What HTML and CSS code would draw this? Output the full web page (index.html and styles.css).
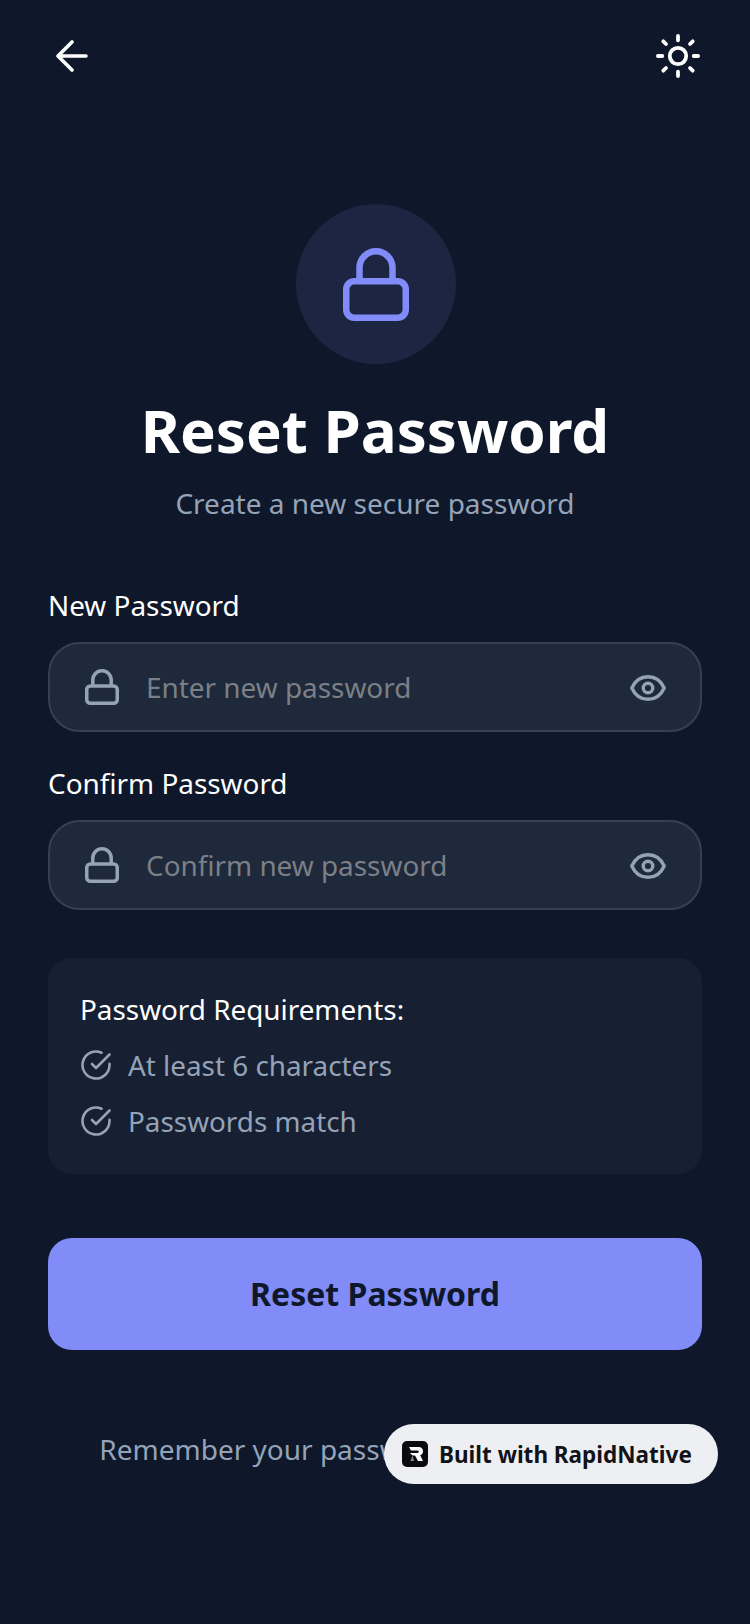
FILE: index.html
```html
<!DOCTYPE html>
<html>
    <head>
        <title>Reset Password</title>
        <link rel="stylesheet" href="styles.css">
    </head>
    <body>
        <div class="screen">
            <header class="topbar">
                <svg class="back-icon" viewBox="0 0 32 32" fill="none" stroke="#fff" stroke-width="3.600" stroke-linecap="round" stroke-linejoin="round">
                    <path d="M30 16H2M16 2 2 16l14 14"/>
                </svg>
                <svg class="sun-icon" viewBox="0 0 44 44" fill="none" stroke="#fff" stroke-width="3.800" stroke-linecap="round">
                    <circle cx="22" cy="22" r="8.200"/>
                    <path d="M22 1.900v4.400M22 37.700v4.400M1.900 22h4.400M37.700 22h4.400M7.300 7.300 10 10M34 34l2.700 2.700M7.300 36.700 10 34M34 10l2.700-2.700"/>
                </svg>
            </header>

            <div class="lock-circle">
                <svg class="lock-big" viewBox="0 0 66 73" fill="none" stroke="#818cf8" stroke-width="6.500" stroke-linejoin="round">
                    <rect x="3.250" y="33.250" width="59.500" height="36.500" rx="8"/>
                    <path d="M16.500 33.250V19.750a16.500 16.500 0 0 1 33 0v13.500"/>
                </svg>
            </div>

            <h1 class="title">Reset Password</h1>
            <p class="subtitle">Create a new secure password</p>

            <label class="field-label">New Password</label>
            <div class="input-box">
                <svg class="lock-small" viewBox="0 0 34 36" fill="none" stroke="#94a3b8" stroke-width="3.500" stroke-linejoin="round">
                    <rect x="1.750" y="17" width="30.500" height="17.250" rx="3.500"/>
                    <path d="M7.800 17V10.900a9.200 9.150 0 0 1 18.400 0V17"/>
                </svg>
                <span class="placeholder">Enter new password</span>
                <svg class="eye" viewBox="0 0 36 26" fill="none" stroke="#94a3b8" stroke-width="3.400">
                    <path d="M1.800 13C5 5.800 11 1.700 18 1.700S31 5.800 34.200 13C31 20.200 25 24.300 18 24.300S5 20.200 1.800 13Z" stroke-linejoin="round"/>
                    <circle cx="18" cy="13" r="4.800"/>
                </svg>
            </div>

            <label class="field-label second">Confirm Password</label>
            <div class="input-box">
                <svg class="lock-small" viewBox="0 0 34 36" fill="none" stroke="#94a3b8" stroke-width="3.500" stroke-linejoin="round">
                    <rect x="1.750" y="17" width="30.500" height="17.250" rx="3.500"/>
                    <path d="M7.800 17V10.900a9.200 9.150 0 0 1 18.400 0V17"/>
                </svg>
                <span class="placeholder">Confirm new password</span>
                <svg class="eye" viewBox="0 0 36 26" fill="none" stroke="#94a3b8" stroke-width="3.400">
                    <path d="M1.800 13C5 5.800 11 1.700 18 1.700S31 5.800 34.200 13C31 20.200 25 24.300 18 24.300S5 20.200 1.800 13Z" stroke-linejoin="round"/>
                    <circle cx="18" cy="13" r="4.800"/>
                </svg>
            </div>

            <div class="req-card">
                <p class="req-title">Password Requirements:</p>
                <div class="req-row">
                    <svg class="check" viewBox="0 0 32 32" fill="none" stroke="#94a3b8" stroke-width="2.600" stroke-linecap="round" stroke-linejoin="round">
                        <path d="M29.500 14.800V16a13.500 13.500 0 1 1-8-12.300"/>
                        <path d="M29.500 5.500 16 19l-4-4"/>
                    </svg>
                    <span>At least 6 characters</span>
                </div>
                <div class="req-row">
                    <svg class="check" viewBox="0 0 32 32" fill="none" stroke="#94a3b8" stroke-width="2.600" stroke-linecap="round" stroke-linejoin="round">
                        <path d="M29.500 14.800V16a13.500 13.500 0 1 1-8-12.300"/>
                        <path d="M29.500 5.500 16 19l-4-4"/>
                    </svg>
                    <span>Passwords match</span>
                </div>
            </div>

            <button class="reset-btn">Reset Password</button>

            <p class="footer-text">Remember your password? <span class="signin">Back to Login</span></p>

            <div class="badge">
                <svg class="badge-logo" viewBox="0 0 26 26">
                    <rect width="26" height="26" rx="5" fill="#0b0b0f"/>
                    <path d="M7 6h9.500c3 0 4.500 1.800 4.500 4.200 0 2-1.100 3.400-2.800 4L21 20h-5l-3-5.500h-2.500L8 12h7.500c.8 0 1.300-.5 1.300-1.200s-.5-1.300-1.300-1.300H9Z" fill="#fff"/>
                    <path d="M10.500 14.500 12 20H8.500Z" fill="#8a8a8f"/>
                </svg>
                <span>Built with RapidNative</span>
            </div>
        </div>
    </body>
</html>
```

FILE: styles.css
```css
html, body {
    margin: 0;
    padding: 0;
}

body {
    background: #0f172a;
    font-family: "Noto Sans", "Open Sans", sans-serif;
}

.screen {
    position: relative;
    box-sizing: border-box;
    width: 750px;
    height: 1624px;
    padding: 32px 48px 0;
    display: flex;
    flex-direction: column;
    overflow: hidden;
}

.topbar {
    display: flex;
    justify-content: space-between;
    align-items: center;
    height: 48px;
}

.back-icon {
    width: 32px;
    height: 32px;
    margin-left: 8px;
}

.sun-icon {
    width: 44px;
    height: 44px;
    margin-right: 2px;
}

.lock-circle {
    width: 160px;
    height: 160px;
    margin: 124px 0 0 248px;
    border-radius: 50%;
    background: #1c2541;
    display: flex;
    align-items: center;
    justify-content: center;
}

.lock-big {
    width: 66px;
    height: 73px;
}

.title {
    margin: 30px 0 0;
    text-align: center;
    color: #fff;
    font-size: 60px;
    line-height: 72px;
    font-weight: 700;
}

.subtitle {
    margin: 17px 0 0;
    text-align: center;
    color: #94a3b8;
    font-size: 28px;
    line-height: 40px;
}

.field-label {
    margin-top: 62px;
    color: #fff;
    font-size: 27.900px;
    line-height: 40px;
}

.field-label.second {
    margin-top: 31px;
}

.input-box {
    box-sizing: border-box;
    height: 90px;
    margin-top: 17px;
    padding: 0 34px 0 35px;
    display: flex;
    align-items: center;
    background: #1e293b;
    border: 2px solid #334155;
    border-radius: 32px;
}

.lock-small {
    width: 34px;
    height: 36px;
    flex: none;
}

.placeholder {
    flex: 1;
    margin-left: 27px;
    color: #7c7f86;
    font-size: 27.900px;
    line-height: 40px;
}

.eye {
    width: 36px;
    height: 26px;
    margin-top: 2px;
    flex: none;
}

.req-card {
    height: 216px;
    box-sizing: border-box;
    margin-top: 48px;
    padding: 31px 32px 0;
    background: #162032;
    border-radius: 24px;
}

.req-title {
    margin: 0;
    color: #fff;
    font-size: 27.850px;
    line-height: 40px;
}

.req-row {
    display: flex;
    align-items: center;
    height: 40px;
    margin-top: 16px;
    color: #94a3b8;
    font-size: 27.850px;
}

.check {
    width: 32px;
    height: 32px;
    margin-right: 16px;
    flex: none;
}

.reset-btn {
    height: 112px;
    margin-top: 64px;
    padding: 0 0 2px;
    border: 0;
    border-radius: 24px;
    background: #818cf8;
    color: #0f172a;
    font-family: inherit;
    font-size: 32px;
    font-weight: 700;
}

.footer-text {
    margin: 79px 0 0;
    text-align: center;
    color: #94a3b8;
    font-size: 28px;
    line-height: 40px;
}

.signin {
    color: #818cf8;
    font-weight: 600;
}

.badge {
    position: absolute;
    left: 384px;
    top: 1424px;
    width: 334px;
    height: 60px;
    box-sizing: border-box;
    padding-left: 18px;
    display: flex;
    align-items: center;
    gap: 11px;
    background: #eeeff3;
    border-radius: 30px;
    color: #111318;
    font-size: 22.500px;
    font-weight: 700;
}

.badge-logo {
    width: 26px;
    height: 26px;
}
```
